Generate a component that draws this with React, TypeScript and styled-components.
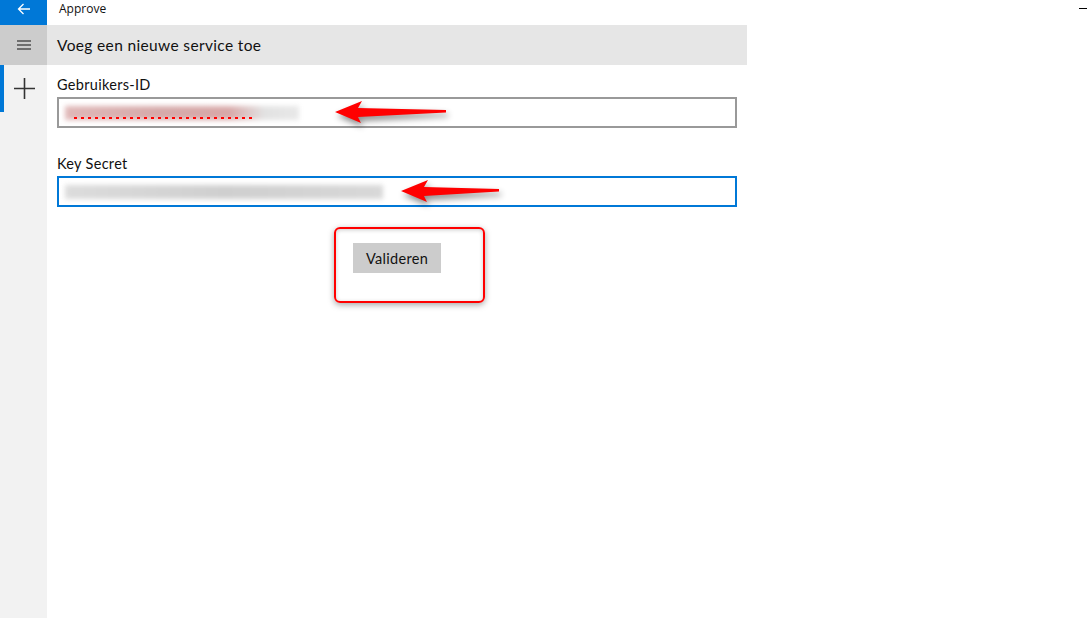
import React from "react";
import styled, { createGlobalStyle } from "styled-components";

const Global = createGlobalStyle`
  html, body { margin: 0; padding: 0; background: #fff; }
  body { font-family: "Open Sans", "Noto Sans", sans-serif; color: #000; }
  * { box-sizing: border-box; }
`;

const Page = styled.div`
  width: 1087px;
  height: 618px;
  display: flex;
  flex-direction: column;
  overflow: hidden;
  position: relative;
`;

const TitleBar = styled.div`
  height: 25px;
  display: flex;
  align-items: flex-start;
`;

const BackButton = styled.div`
  width: 47px;
  height: 25px;
  background: #0078d7;
  display: flex;
  align-items: flex-start;
  justify-content: center;
  padding-top: 3px;
`;

const AppTitle = styled.div`
  margin-left: 12px;
  font-family: "Open Sans", sans-serif;
  font-size: 12px;
  line-height: 18px;
  color: #111;
  flex: 1;
`;

const Minimize = styled.div`
  width: 8px;
  height: 1px;
  background: #000;
  margin-top: 8px;
`;

const Body = styled.div`
  flex: 1;
  display: flex;
`;

const Sidebar = styled.div`
  width: 47px;
  background: #f2f2f2;
  display: flex;
  flex-direction: column;
`;

const MenuButton = styled.div`
  height: 40px;
  background: #cccccc;
  display: flex;
  align-items: center;
  justify-content: center;
`;

const NavItem = styled.div<{ $active?: boolean }>`
  height: 47px;
  display: flex;
  align-items: center;
  justify-content: center;
  border-left: 4px solid ${(p) => (p.$active ? "#0078d7" : "transparent")};
  padding-right: 3px;
`;

const Main = styled.div`
  width: 700px;
  display: flex;
  flex-direction: column;
  position: relative;
`;

const Header = styled.div`
  height: 40px;
  background: #e6e6e6;
  display: flex;
  align-items: center;
  padding-left: 10px;
  font-family: "Lato", "Open Sans", sans-serif;
  font-size: 15.5px;
  letter-spacing: 0.35px;
  color: #111;
`;

const Content = styled.div`
  padding: 10px 10px 0 10px;
  display: flex;
  flex-direction: column;
`;

const Field = styled.div`
  display: flex;
  flex-direction: column;
  gap: 2px;
  margin-bottom: 26px;
`;

const Label = styled.div`
  height: 20px;
  line-height: 20px;
  font-family: "Lato", "Open Sans", sans-serif;
  font-size: 14.5px;
  letter-spacing: 0.3px;
  color: #111;
`;

const InputBox = styled.div<{ $focused?: boolean }>`
  width: 680px;
  height: 31px;
  border: 2px solid ${(p) => (p.$focused ? "#0078d7" : "#999999")};
  background: #fff;
  display: flex;
  align-items: center;
  padding-left: 4px;
  position: relative;
`;

const Blurred = styled.div<{ $tint: string; $w: number }>`
  height: 14px;
  width: ${(p) => p.$w}px;
  background: ${(p) => p.$tint};
  filter: blur(2.5px);
  margin-left: 2px;
`;

const Squiggle = styled.div`
  position: absolute;
  left: 15px;
  top: 18px;
  width: 180px;
  height: 2px;
  background: repeating-linear-gradient(90deg, #ff0000 0 3px, transparent 3px 7px);
`;

const ButtonRow = styled.div`
  display: flex;
  justify-content: center;
  margin-top: 10px;
  width: 680px;
`;

const Button = styled.button`
  width: 88px;
  height: 30px;
  border: none;
  background: #cccccc;
  font-family: "Lato", "Open Sans", sans-serif;
  font-size: 14.5px;
  letter-spacing: 0.3px;
  color: #111;
  padding: 0;
`;

const Highlight = styled.div`
  position: absolute;
  left: 287px;
  top: 202px;
  width: 151px;
  height: 76px;
  border: 2px solid #ff0000;
  border-radius: 6px;
  box-shadow: 0 2px 6px rgba(0, 0, 0, 0.35), inset 0 1px 4px rgba(0, 0, 0, 0.2);
`;

const ArrowSvg = styled.svg`
  position: absolute;
  overflow: visible;
  filter: drop-shadow(2px 4px 3px rgba(0, 0, 0, 0.45));
`;

const Arrow = ({ x, y, len }: { x: number; y: number; len: number }) => (
  <ArrowSvg
    style={{ left: x, top: y - 12 }}
    width={len}
    height={24}
    viewBox={`0 -12 ${len} 24`}
  >
    <polygon
      points={`0,0 27,-11 23,-4 ${len},-2 ${len},0.5 23,5 26,11`}
      fill="#ff0000"
    />
  </ArrowSvg>
);

export default function App() {
  return (
    <>
      <Global />
      <Page>
        <TitleBar>
          <BackButton>
            <svg width="14" height="12" viewBox="0 0 14 12">
              <path d="M13 6H1.5M6.5 1L1.5 6l5 5" stroke="#fff" strokeWidth="1.3" fill="none" />
            </svg>
          </BackButton>
          <AppTitle>Approve</AppTitle>
          <Minimize />
        </TitleBar>
        <Body>
          <Sidebar>
            <MenuButton>
              <svg width="14" height="10" viewBox="0 0 14 10">
                <path d="M0 1h14M0 5h14M0 9h14" stroke="#111" strokeWidth="1" />
              </svg>
            </MenuButton>
            <NavItem $active>
              <svg width="21" height="21" viewBox="0 0 21 21">
                <path d="M10.5 0v21M0 10.5h21" stroke="#333" strokeWidth="1.6" />
              </svg>
            </NavItem>
          </Sidebar>
          <Main>
            <Header>Voeg een nieuwe service toe</Header>
            <Content>
              <Field>
                <Label>Gebruikers-ID</Label>
                <InputBox>
                  <Blurred
                    $w={234}
                    $tint="linear-gradient(90deg, #e0b8b8 0%, #d6aaaa 40%, #d8a8a8 70%, #e2e2e2 85%, #e8e8e8 100%)"
                  />
                  <Squiggle />
                </InputBox>
              </Field>
              <Field>
                <Label>Key Secret</Label>
                <InputBox $focused>
                  <Blurred $w={318} $tint="linear-gradient(90deg, #dcdcdc, #cfcfcf 50%, #d8d8d8)" />
                </InputBox>
              </Field>
              <ButtonRow>
                <Button>Valideren</Button>
              </ButtonRow>
            </Content>
            <Highlight />
            <Arrow x={288} y={87} len={111} />
            <Arrow x={354} y={166} len={98} />
          </Main>
        </Body>
      </Page>
    </>
  );
}
